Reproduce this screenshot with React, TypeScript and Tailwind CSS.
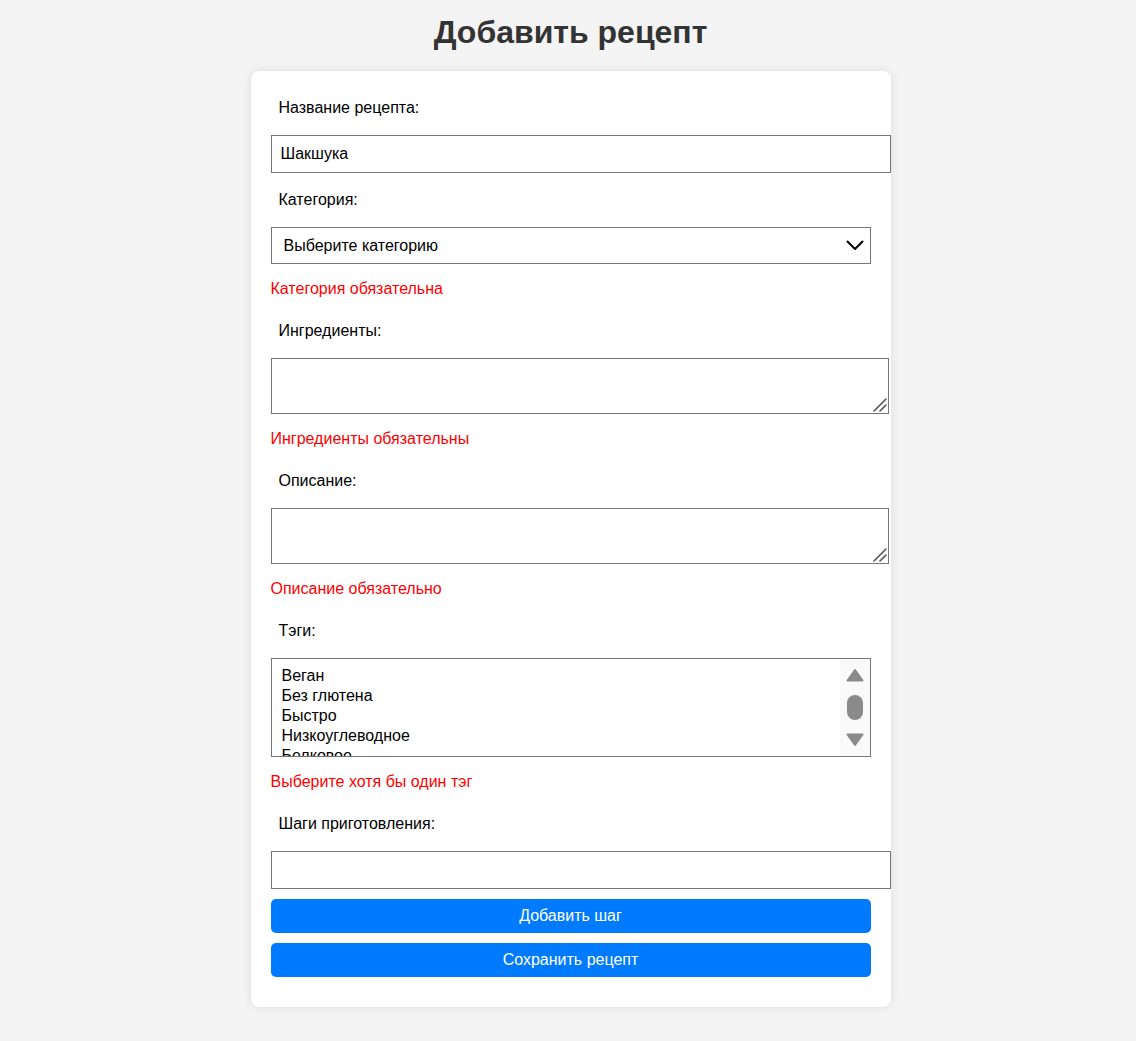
import React from 'react';

const tags = ['Веган', 'Без глютена', 'Быстро', 'Низкоуглеводное', 'Белковое'];

const Label: React.FC<{ text: string }> = ({ text }) => (
  <label className="block px-2 pt-[8px] pb-[6px] mb-[12px] leading-[18px]">{text}</label>
);

const Error: React.FC<{ text: string }> = ({ text }) => (
  <div className="text-[#ff0000] leading-[18px] mt-[6px] mb-[16px]">{text}</div>
);

const TextArea: React.FC = () => (
  <div className="relative w-[618px] h-[56px] mb-[10px]">
    <textarea className="block w-full h-full border border-[#767676] p-2 resize-none outline-none" />
    <svg className="absolute right-[2px] bottom-[2px] pointer-events-none" width="15" height="15" viewBox="0 0 15 15">
      <path d="M2 14 L14 2 M8 14 L14 8" stroke="#555" strokeWidth="1.6" strokeLinecap="round" />
    </svg>
  </div>
);

const AddRecipe: React.FC = () => {
  return (
    <div className="min-h-screen bg-[#f4f4f4] pl-[5px] pt-[14px] pb-[34px] text-[16px] text-black font-['Liberation_Sans',Arial,sans-serif]">
      <h1 className="text-center text-[32px] leading-[37px] font-bold text-[#333] mb-[20px]">Добавить рецепт</h1>

      <form
        className="mx-auto w-[640px] bg-white rounded-lg shadow-[0_0_10px_rgba(0,0,0,0.1)] px-5 pt-5 pb-[30px] flex flex-col"
        onSubmit={(e) => e.preventDefault()}
      >
        <Label text="Название рецепта:" />
        <input
          className="w-[620px] h-[38px] border border-[#767676] px-[9px] mb-[10px] leading-[18px] outline-none"
          defaultValue="Шакшука"
        />

        <Label text="Категория:" />
        <div className="relative w-[600px] h-[37px]">
          <select className="appearance-none w-full h-full border border-[#767676] pl-[12px] leading-[18px] outline-none">
            <option>Выберите категорию</option>
            <option>Завтрак</option>
            <option>Обед</option>
            <option>Ужин</option>
          </select>
          <svg className="absolute right-[7px] top-[13px] pointer-events-none" width="18" height="11" viewBox="0 0 18 11">
            <path d="M1.5 1.5 L9 9 L16.5 1.5" fill="none" stroke="#000" strokeWidth="2" strokeLinecap="round" strokeLinejoin="round" />
          </svg>
        </div>
        <div className="h-[10px]" />
        <Error text="Категория обязательна" />

        <Label text="Ингредиенты:" />
        <TextArea />
        <Error text="Ингредиенты обязательны" />

        <Label text="Описание:" />
        <TextArea />
        <Error text="Описание обязательно" />

        <Label text="Тэги:" />
        <div className="flex w-[600px] h-[99px] border border-[#767676] mb-[10px]">
          <div className="flex-1 overflow-hidden pl-[10px] pt-[7px]">
            {tags.map((t) => (
              <div key={t} className="leading-[20px]">
                {t}
              </div>
            ))}
          </div>
          <div className="w-[30px] bg-[#fafafa] flex flex-col items-center">
            <svg className="mt-[9px]" width="18" height="14" viewBox="0 0 18 14">
              <path d="M9 2 L16.5 12.5 L1.5 12.5 Z" fill="#8a8a8a" stroke="#8a8a8a" strokeWidth="2" strokeLinejoin="round" />
            </svg>
            <div className="mt-[13px] w-[16px] h-[25px] rounded-full bg-[#8a8a8a]" />
            <svg className="mt-[13px]" width="18" height="14" viewBox="0 0 18 14">
              <path d="M1.5 1.5 L16.5 1.5 L9 12 Z" fill="#8a8a8a" stroke="#8a8a8a" strokeWidth="2" strokeLinejoin="round" />
            </svg>
          </div>
        </div>
        <Error text="Выберите хотя бы один тэг" />

        <Label text="Шаги приготовления:" />
        <input className="w-[620px] h-[38px] border border-[#767676] px-[9px] mb-[10px] outline-none" />

        <button type="button" className="w-[600px] h-[34px] bg-[#007bff] text-white rounded-[5px] mb-[10px]">
          Добавить шаг
        </button>
        <button type="submit" className="w-[600px] h-[34px] bg-[#007bff] text-white rounded-[5px]">
          Сохранить рецепт
        </button>
      </form>
    </div>
  );
};

export default AddRecipe;
